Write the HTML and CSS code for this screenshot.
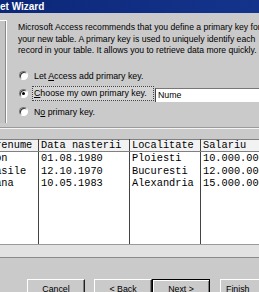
FILE: index.html
```html
<!DOCTYPE html>
<html>
<head>
<meta charset="utf-8">
<link rel="stylesheet" href="styles.css">
</head>
<body>
<div class="win">
  <div class="titlebar"><span class="title">et Wizard</span></div>
  <div class="top">
    <div class="art"></div>
    <div class="content">
      <p class="intro">Microsoft Access recommends that you define a primary key for<br>your new table. A primary key is used to uniquely identify each<br>record in your table. It allows you to retrieve data more quickly.</p>
      <div class="options">
        <div class="opt"><span class="radio"></span><span class="lbl">Let <u>A</u>ccess add primary key.</span></div>
        <div class="opt"><span class="radio checked"></span><span class="lbl focus"><u>C</u>hoose my own primary key.</span><span class="field">Nume</span></div>
        <div class="opt"><span class="radio"></span><span class="lbl">N<u>o</u> primary key.</span></div>
      </div>
    </div>
  </div>
  <div class="sep"></div>
  <div class="gridframe">
    <div class="gridview">
      <table class="grid">
        <thead>
          <tr><th class="c1">Prenume</th><th class="c2">Data nasterii</th><th class="c3">Localitate</th><th class="c4">Salariu</th></tr>
        </thead>
        <tbody>
          <tr><td>Ion</td><td>01.08.1980</td><td>Ploiesti</td><td>10.000.000</td></tr>
          <tr><td>Vasile</td><td>12.10.1970</td><td>Bucuresti</td><td>12.000.000</td></tr>
          <tr><td>Oana</td><td>10.05.1983</td><td>Alexandria</td><td>15.000.000</td></tr>
          <tr class="filler"><td></td><td></td><td></td><td></td></tr>
        </tbody>
      </table>
    </div>
    <div class="hscroll">
      <span class="track"></span>
      <span class="arrow"><svg width="4" height="7" viewBox="0 0 4 7"><path d="M0 0 L4 3.5 L0 7 Z" fill="#000"/></svg></span>
    </div>
  </div>
  <div class="buttons">
    <span class="btn"><span>Cancel</span></span>
    <span class="pair"><span class="btn"><span>&lt; <u>B</u>ack</span></span><span class="btn default"><span><u>N</u>ext &gt;</span></span></span>
    <span class="btn finish"><span><u>F</u>inish</span></span>
  </div>
</div>
</body>
</html>
```

FILE: styles.css
```css
html, body {
  margin: 0;
  padding: 0;
}
body {
  width: 259px;
  height: 292px;
  overflow: hidden;
  background: #cacaca;
  font-family: "Liberation Sans", Arial, sans-serif;
  font-size: 8.8px;
  color: #000;
}
.win {
  width: 300px;
}
.titlebar {
  height: 13px;
  background: linear-gradient(90deg, #0c2779, #15368f);
  color: #fff;
  font-weight: bold;
  font-size: 10px;
  line-height: 13px;
  white-space: nowrap;
}
.top {
  display: flex;
  height: 114px;
}
.art {
  width: 6px;
  height: 102px;
  margin-top: 7px;
  border-top: 1px solid #fff;
  border-right: 1px solid #fff;
  box-shadow: inset -1px 0 0 #8a8a8a;
  background: #c4c4c4;
}
.content {
  padding-left: 11px;
  flex: 1;
}
.intro {
  margin: 9px 0 0;
  font-size: 8.65px;
  line-height: 11.5px;
  white-space: nowrap;
}
.options {
  margin-top: 10px;
}
.opt {
  display: flex;
  align-items: center;
  height: 18px;
  white-space: nowrap;
}
.radio {
  width: 9px;
  height: 9px;
  box-sizing: border-box;
  border-radius: 50%;
  margin-left: 1px;
  margin-right: 4px;
  background: #fff;
  border: 1px solid;
  border-color: #777 #fff #fff #777;
  box-shadow: inset 1px 1px 0 #333;
  position: relative;
}
.radio.checked::after {
  content: "";
  position: absolute;
  left: 2px;
  top: 2px;
  width: 3px;
  height: 3px;
  border-radius: 50%;
  background: #000;
}
.lbl {
  padding-left: 2px;
}
.focus {
  box-sizing: border-box;
  width: 122px;
  height: 15px;
  line-height: 13px;
  border: 1px dotted #444;
  background: #d4d4d4;
  padding-left: 1px;
}
.field {
  box-sizing: border-box;
  width: 120px;
  height: 14px;
  margin-left: 1px;
  margin-top: 2px;
  background: #fff;
  border-top: 1px solid #777;
  border-left: 1px solid #444;
  padding-left: 2px;
  line-height: 12px;
}
.sep {
  height: 0;
  border-top: 1px solid #9a9a9a;
  border-bottom: 1px solid #f4f4f4;
}
.gridframe {
  margin-top: 10px;
}
.gridview {
  overflow: hidden;
  background: #fff;
}
.grid {
  border-collapse: collapse;
  margin-left: -14px;
  font-family: "Liberation Mono", "Courier New", monospace;
  font-size: 10.3px;
  table-layout: fixed;
}
.grid th, .grid td {
  text-align: left;
  font-weight: normal;
  padding: 0 0 0 2px;
  white-space: nowrap;
  overflow: hidden;
  border-left: 1px solid #444;
  border-right: 1px solid #444;
}
.grid th {
  height: 11px;
  line-height: 11px;
  background: #f2f2f2;
  border: 1px solid #808080;
  border-right-color: #444;
}
.grid td {
  height: 12.5px;
  line-height: 12.5px;
}
.grid .filler td {
  height: 54px;
}
.c1 { width: 49px; }
.c2 { width: 88px; }
.c3 { width: 68px; }
.c4 { width: 90px; }
.hscroll {
  display: flex;
  height: 12px;
  border-top: 1px solid #9a9a9a;
  border-bottom: 1px solid #8a8a8a;
}
.track {
  flex: 1;
  background: #e2e2e2;
}
.arrow {
  width: 9px;
  box-sizing: border-box;
  display: flex;
  align-items: center;
  justify-content: center;
  background: #cfcfcf;
  border: 1px solid;
  border-color: #fff #555 #555 #fff;
}
.buttons {
  display: flex;
  margin-top: 21px;
  padding-left: 27px;
  gap: 9px;
}
.pair {
  display: flex;
}
.btn {
  box-sizing: border-box;
  width: 58px;
  height: 21px;
  display: flex;
  align-items: center;
  justify-content: center;
  background: #cacaca;
  border: 1px solid;
  border-color: #fff #222 #222 #fff;
  box-shadow: inset -1px -1px 0 #808080;
  padding-bottom: 1px;
  white-space: nowrap;
}
.btn.default {
  border-color: #000;
  box-shadow: inset 1px 1px 0 #fff, inset -1px -1px 0 #808080;
}
.btn.finish {
  margin-left: 1px;
  justify-content: flex-start;
  padding-left: 5px;
}
```
